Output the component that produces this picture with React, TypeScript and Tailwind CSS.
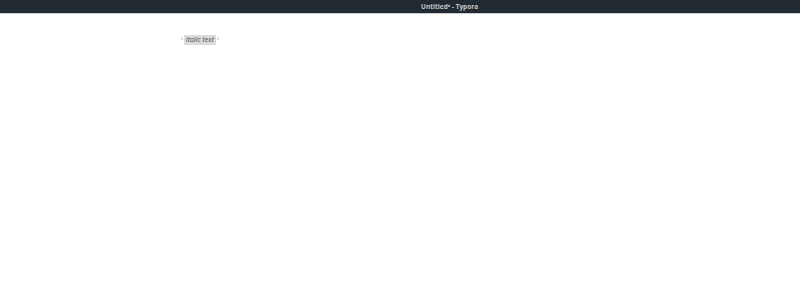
export default function App() {
  return (
    <div className="w-[800px] h-[284px] bg-white flex flex-col" style={{ fontFamily: '"Open Sans", "Liberation Sans", sans-serif' }}>
      <div className="h-[14px] bg-[#222b31] border-b border-[#c9cdd0] flex items-center pl-[421px] shrink-0">
        <span className="text-[6.5px] leading-none font-bold text-[#c3c8cc] pt-px">Untitled• - Typora</span>
      </div>
      <div className="pl-[180px] pt-[21px]">
        <p className="text-[7px] leading-[10px] flex items-center">
          <span className="text-[#d0d0d0]">*</span>
          <span className="bg-[#d9dbdd] italic text-[#505050] px-[2px]">Italic text</span>
          <span className="text-[#d0d0d0]">*</span>
        </p>
      </div>
    </div>
  );
}
